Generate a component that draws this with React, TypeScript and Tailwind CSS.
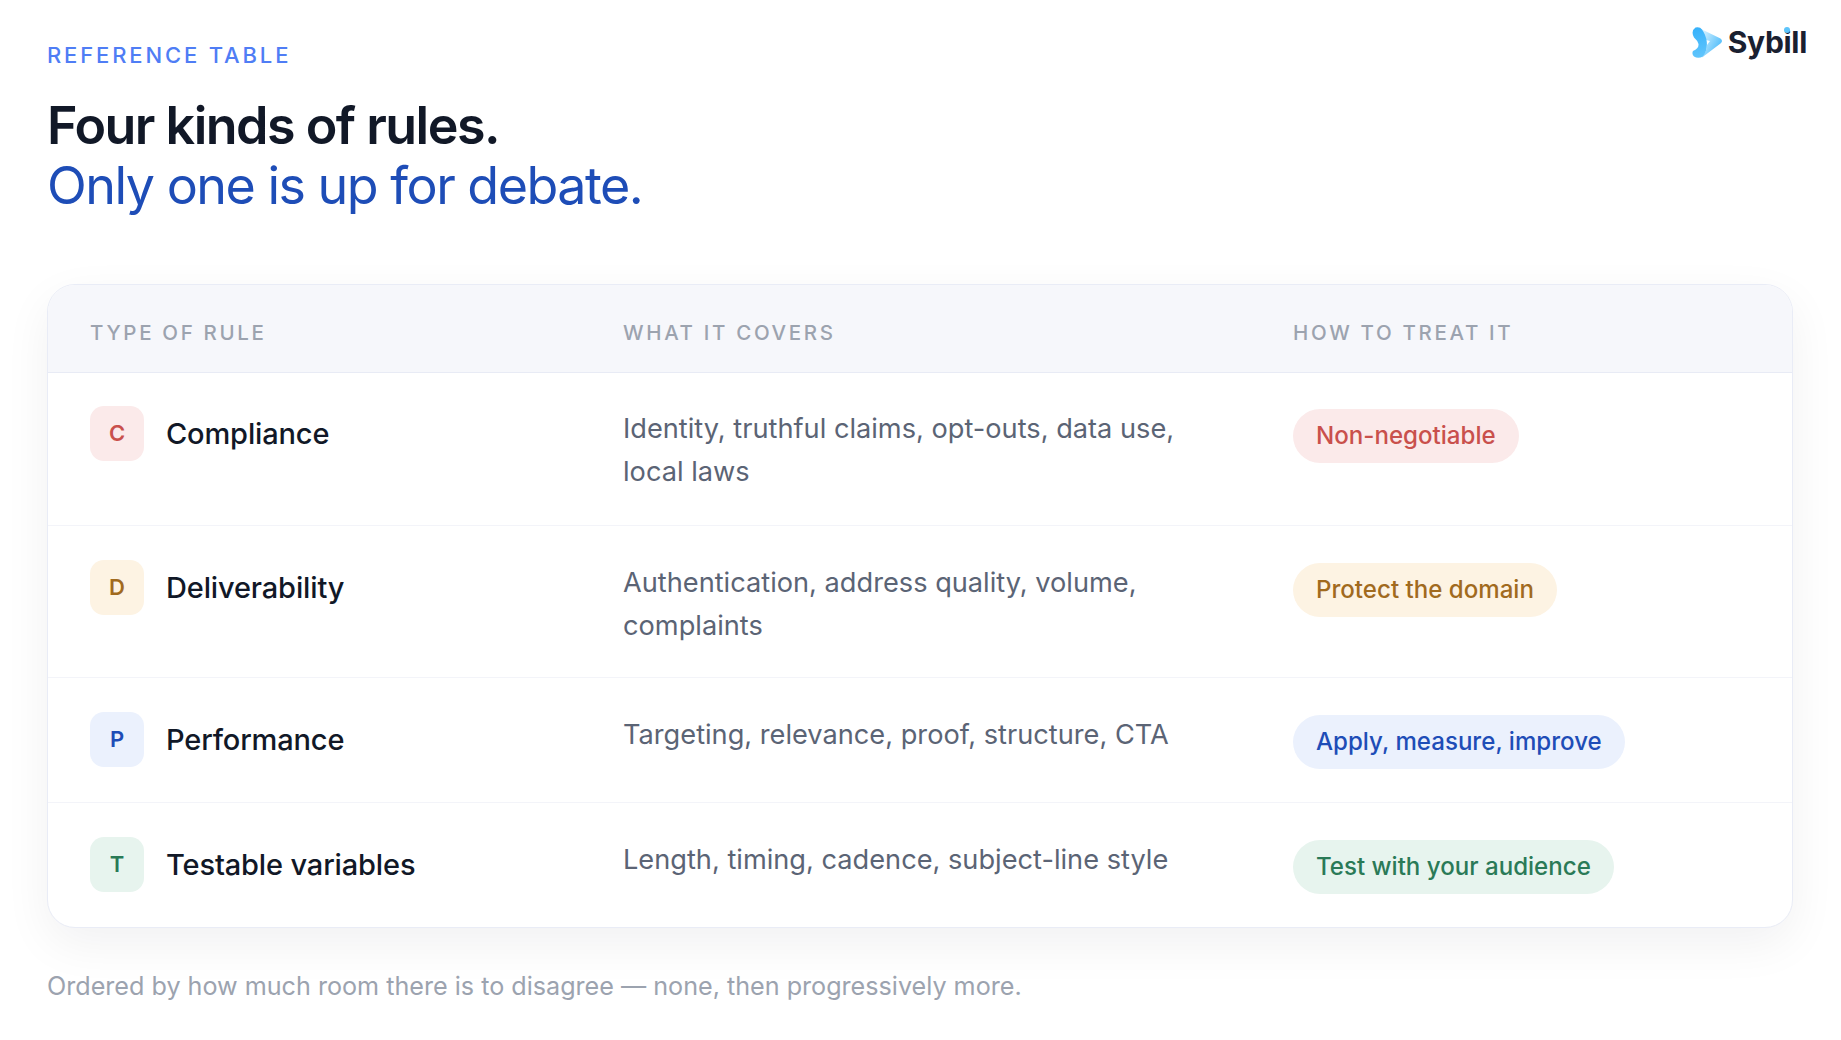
const rows = [
  {
    letter: "C",
    name: "Compliance",
    covers: ["Identity, truthful claims, opt-outs, data use,", "local laws"],
    treat: "Non-negotiable",
    tint: "bg-[#fbeaea] text-[#c9504c]",
  },
  {
    letter: "D",
    name: "Deliverability",
    covers: ["Authentication, address quality, volume,", "complaints"],
    treat: "Protect the domain",
    tint: "bg-[#fdf3e3] text-[#a16a1e]",
  },
  {
    letter: "P",
    name: "Performance",
    covers: ["Targeting, relevance, proof, structure, CTA"],
    treat: "Apply, measure, improve",
    tint: "bg-[#ebf1fd] text-[#1e4db7]",
  },
  {
    letter: "T",
    name: "Testable variables",
    covers: ["Length, timing, cadence, subject-line style"],
    treat: "Test with your audience",
    tint: "bg-[#e7f4ee] text-[#2a7a57]",
  },
];

const Logo = () => (
  <svg width="31" height="31" viewBox="0 0 31 31" className="shrink-0">
    <defs>
      <linearGradient id="wing" x1="10" y1="5" x2="29" y2="15" gradientUnits="userSpaceOnUse">
        <stop offset="0" stopColor="#d6f1ff" />
        <stop offset="1" stopColor="#5cc2fb" />
      </linearGradient>
      <linearGradient id="ribbon" x1="3" y1="0" x2="12" y2="31" gradientUnits="userSpaceOnUse">
        <stop offset="0" stopColor="#35b1fb" />
        <stop offset="1" stopColor="#63c6fc" />
      </linearGradient>
    </defs>
    <path d="M8 1.5 L28.5 11.5 Q31.5 14 28.5 16.5 L10 30.5 Q15 24 15 18 L18 14 L14 13 Q12 6 8 1.5Z" fill="url(#wing)" />
    <path d="M3.5 0.5 Q8 -0.5 10 2.5 Q14 8 14.8 15 Q15.5 24 11 29.5 Q6 32 2 29.5 Q-0.5 27 1 24 Q7 21.5 6.5 17 Q5.5 13.5 2 10.5 Q-1.5 4 3.5 0.5Z" fill="url(#ribbon)" />
  </svg>
);

export default function App() {
  return (
    <div className="min-h-screen bg-white px-[47px] pt-[41px] font-['Inter',sans-serif]">
      <header className="flex items-start justify-between">
        <div>
          <div className="text-[22px] leading-[28px] font-medium tracking-[0.13em] text-[#4f7df5]">REFERENCE TABLE</div>
          <h1 className="mt-[27px] text-[52px] leading-[60px] tracking-[-0.029em] font-semibold text-[#111827]">
            Four kinds of rules.
            <br />
            <span className="font-normal text-[#1e4db7]">Only one is up for debate.</span>
          </h1>
        </div>
        <div className="-mt-[19px] -mr-[13px] flex items-center gap-[5px]">
          <Logo />
          <span className="relative text-[30px] leading-[40px] font-bold tracking-[-0.01em] text-[#1a2030]">
            Sybill
            <span className="absolute left-[56px] top-[5px] h-[6px] w-[6px] rounded-full bg-[#5cc4fb]" />
          </span>
        </div>
      </header>

      <div className="mt-[68px] w-[1746px] overflow-hidden rounded-[28px] border border-[#e9ecf6] bg-white shadow-[0_16px_48px_rgba(15,23,42,0.06)]">
        <div className="grid grid-cols-[532px_670px_1fr] border-b border-[#e8ebf5] bg-[#f6f7fb] pt-[8px] text-[20.5px] leading-[79px] font-medium tracking-[0.13em] text-[#9ca3af]">
          <div className="pl-[42px]">TYPE OF RULE</div>
          <div className="pl-[43px]">WHAT IT COVERS</div>
          <div className="pl-[43px]">HOW TO TREAT IT</div>
        </div>
        {rows.map((row, i) => (
          <div
            key={row.name}
            className={`grid grid-cols-[532px_670px_1fr] ${i === 0 ? "pt-[33.5px] pb-[32.5px]" : i === 3 ? "pt-[34.5px] pb-[30px]" : "pt-[34.5px] pb-[30.5px]"} ${i < rows.length - 1 ? "border-b border-[#f3f4f9]" : ""}`}
          >
            <div className="-mt-[1px] flex items-start gap-[22px] pl-[42px]">
              <div className={`flex h-[55px] w-[54px] items-center justify-center rounded-[14px] text-[22px] font-semibold ${row.tint}`}>
                {row.letter}
              </div>
              <div className="text-[29px] leading-[55px] tracking-[-0.005em] font-medium text-[#111827]">{row.name}</div>
            </div>
            <div className="pl-[43px] text-[27.2px] leading-[43px] text-[#5b6475]">
              {row.covers.map((line) => (
                <div key={line}>{line}</div>
              ))}
            </div>
            <div className="pl-[43px] pt-[2.5px] pb-[2.5px]">
              <span className={`inline-block rounded-full px-[23px] align-top text-[24.1px] leading-[54px] font-medium ${row.tint}`}>
                {row.treat}
              </span>
            </div>
          </div>
        ))}
      </div>

      <p className="mt-[40px] text-[25.15px] leading-[36px] text-[#9ca3af]">
        Ordered by how much room there is to disagree — none, then progressively more.
      </p>
    </div>
  );
}
